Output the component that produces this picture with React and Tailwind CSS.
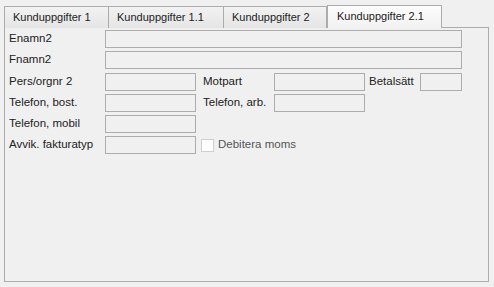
export default function App() {
  const font = { fontFamily: '"Liberation Sans", Arial, sans-serif' };

  const tabs = [
    { label: "Kunduppgifter 1", w: "w-[104px]" },
    { label: "Kunduppgifter 1.1", w: "w-[115px]" },
    { label: "Kunduppgifter 2", w: "w-[104px]" },
  ];

  return (
    <div className="w-[494px] h-[287px] bg-[#f0f0f0] pl-[4px] pt-[5px] text-[#222]" style={font}>
      {/* TAB STRIP */}
      <div className="flex items-end h-[23px]">
        {tabs.map((t, i) => (
          <div
            key={t.label}
            className={`${t.w} h-[22px] border-t border-l border-[#acacac] bg-gradient-to-b from-[#f2f2f2] to-[#e5e5e5] flex items-center pl-[8px] text-[11px] ${i === 2 ? "border-r" : ""}`}
          >
            {t.label}
          </div>
        ))}
        <div className="relative z-10 w-[115px] h-[23px] border-t border-l border-r border-[#acacac] bg-gradient-to-b from-[#fcfcfc] to-[#f2f2f2] flex items-center pl-[9px] text-[11px] pb-px">
          Kunduppgifter 2.1
        </div>
      </div>

      {/* PANEL */}
      <div className="-mt-px w-[485px] h-[255px] border border-[#acacac] bg-[#f0f0f0] pl-[4px] pt-[2px] text-[11.5px]">
        <div className="flex items-center h-[18px]">
          <span className="w-[96px]">Enamn2</span>
          <div className="w-[357px] h-[18px] border border-[#adadad]" />
        </div>
        <div className="flex items-center h-[18px] mt-[3px]">
          <span className="w-[96px]">Fnamn2</span>
          <div className="w-[357px] h-[18px] border border-[#adadad]" />
        </div>

        <div className="flex items-center h-[18px] mt-[4px]">
          <span className="w-[96px]">Pers/orgnr 2</span>
          <div className="w-[91px] h-[18px] border border-[#adadad]" />
          <span className="w-[71px] ml-[7px]">Motpart</span>
          <div className="w-[91px] h-[18px] border border-[#adadad]" />
          <span className="w-[51px] ml-[4px]">Betalsätt</span>
          <div className="w-[42px] h-[18px] border border-[#adadad]" />
        </div>
        <div className="flex items-center h-[18px] mt-[3px]">
          <span className="w-[96px]">Telefon, bost.</span>
          <div className="w-[91px] h-[18px] border border-[#adadad]" />
          <span className="w-[71px] ml-[7px]">Telefon, arb.</span>
          <div className="w-[91px] h-[18px] border border-[#adadad]" />
        </div>
        <div className="flex items-center h-[18px] mt-[3px]">
          <span className="w-[96px]">Telefon, mobil</span>
          <div className="w-[91px] h-[18px] border border-[#adadad]" />
        </div>
        <div className="flex items-center h-[18px] mt-[3px]">
          <span className="w-[96px]">Avvik. fakturatyp</span>
          <div className="w-[91px] h-[18px] border border-[#adadad]" />
          <div className="w-[13px] h-[13px] ml-[5px] border border-[#cfcfcf] bg-white" />
          <span className="ml-[4px] text-[#555]">Debitera moms</span>
        </div>
      </div>
    </div>
  );
}
